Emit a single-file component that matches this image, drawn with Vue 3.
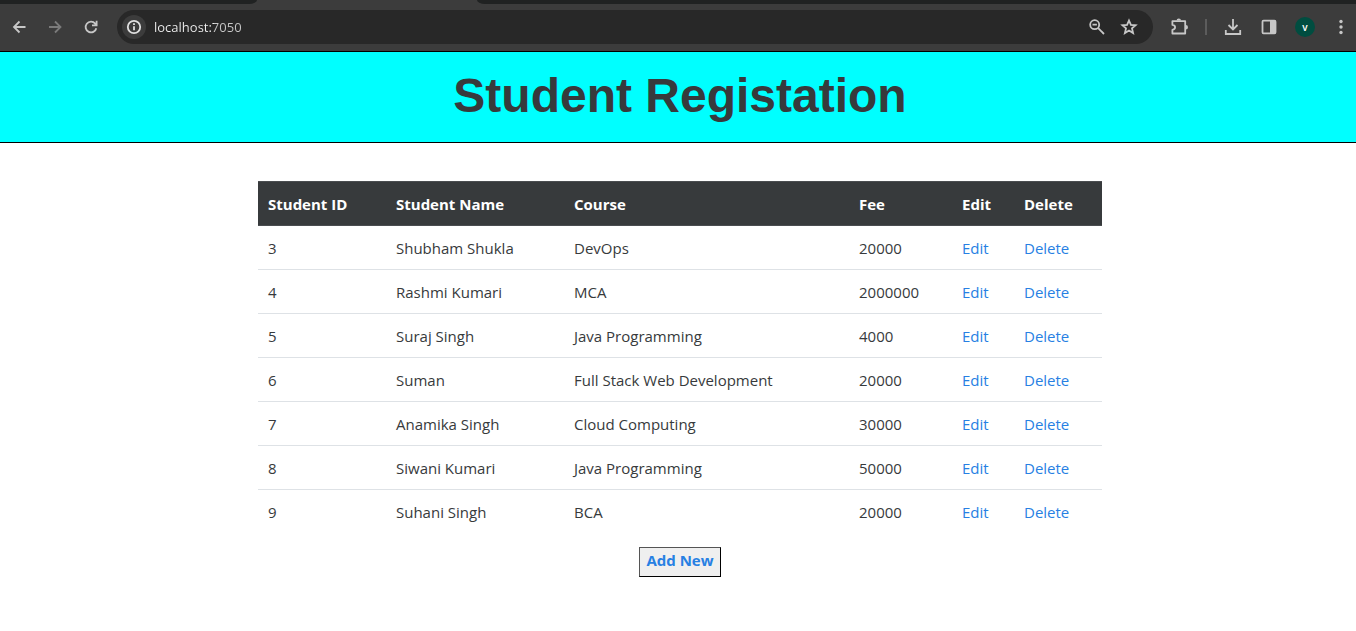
<script setup>
const columns = ['Student ID', 'Student Name', 'Course', 'Fee', 'Edit', 'Delete']

const students = [
  { id: 3, name: 'Shubham Shukla', course: 'DevOps', fee: 20000 },
  { id: 4, name: 'Rashmi Kumari', course: 'MCA', fee: 2000000 },
  { id: 5, name: 'Suraj Singh', course: 'Java Programming', fee: 4000 },
  { id: 6, name: 'Suman', course: 'Full Stack Web Development', fee: 20000 },
  { id: 7, name: 'Anamika Singh', course: 'Cloud Computing', fee: 30000 },
  { id: 8, name: 'Siwani Kumari', course: 'Java Programming', fee: 50000 },
  { id: 9, name: 'Suhani Singh', course: 'BCA', fee: 20000 },
]
</script>

<template>
  <div class="page">
    <div class="browser">
      <div class="tabs">
        <span class="tab-before"></span>
        <span class="tab-active"></span>
        <span class="tab-after"></span>
      </div>
      <div class="toolbar">
        <button class="tool" type="button" aria-label="Back">
          <svg viewBox="0 0 20 20"><path d="M16.500 10H5M10.500 4.500 5 10l5.500 5.500" /></svg>
        </button>
        <button class="tool dim" type="button" aria-label="Forward">
          <svg viewBox="0 0 20 20"><path d="M4 10h11.500M10 4.500 15.500 10 10 15.500" /></svg>
        </button>
        <button class="tool" type="button" aria-label="Reload">
          <svg viewBox="0 0 20 20"><path d="M15.300 11.200A5.400 5.400 0 1 1 14.200 6.600L15.300 8M15.600 3.800V8.400H11" /></svg>
        </button>
        <div class="address">
          <button class="info" type="button" aria-label="Site information">
            <svg viewBox="0 0 20 20"><circle cx="10" cy="10" r="6.200" /><path d="M10 9.200v4M10 6.300v1.800" /></svg>
          </button>
          <input class="url" type="text" value="localhost:7050" aria-label="Address" spellcheck="false" />
          <button class="tool" type="button" aria-label="Zoom">
            <svg viewBox="0 0 20 20"><circle cx="7.700" cy="7.700" r="4.500" /><path d="M11.200 11.200 17 17M5.500 7.700h4.400" /></svg>
          </button>
          <button class="tool" type="button" aria-label="Bookmark">
            <svg viewBox="0 0 20 20"><path d="m10 3.500 1.900 4.400 4.700.4-3.600 3.100 1.100 4.700-4.100-2.500-4.100 2.500L7 11.400 3.400 8.300l4.700-.4z" /></svg>
          </button>
        </div>
        <button class="tool" type="button" aria-label="Extensions">
          <svg viewBox="0 0 20 20"><path stroke-linejoin="round" d="M3.400 4.200H16.200V16.500H3.400V12.900C7 12.300 7 8.400 3.400 7.900Z" /><path class="solid" d="M7.600 3.600a2.200 2.200 0 0 1 4.400 0ZM16.800 8a2.200 2.200 0 0 1 0 4.400Z" /></svg>
        </button>
        <span class="divider"></span>
        <button class="tool" type="button" aria-label="Downloads">
          <svg viewBox="0 0 20 20"><path d="M10 2v10M5.500 8 10 12.400 14.500 8M2.800 13v4h14.400v-4" /></svg>
        </button>
        <button class="tool" type="button" aria-label="Side panel">
          <svg viewBox="0 0 20 20"><rect x="3.500" y="3.700" width="13" height="12.600" rx="1" /><path class="solid" d="M11 3.500h5.500v13H11z" /></svg>
        </button>
        <button class="avatar" type="button" aria-label="Profile">v</button>
        <button class="tool" type="button" aria-label="Menu">
          <svg viewBox="0 0 20 20"><g class="solid"><circle cx="10" cy="4.500" r="1.700" /><circle cx="10" cy="10" r="1.700" /><circle cx="10" cy="15.500" r="1.700" /></g></svg>
        </button>
      </div>
    </div>

    <header class="banner">
      <h1>Student Registation</h1>
    </header>

    <main class="content">
      <table class="students">
        <colgroup>
          <col class="c-id" /><col class="c-name" /><col class="c-course" />
          <col class="c-fee" /><col class="c-edit" /><col class="c-delete" />
        </colgroup>
        <thead>
          <tr><th v-for="c in columns" :key="c" scope="col">{{ c }}</th></tr>
        </thead>
        <tbody>
          <tr v-for="s in students" :key="s.id">
            <td>{{ s.id }}</td>
            <td>{{ s.name }}</td>
            <td>{{ s.course }}</td>
            <td>{{ s.fee }}</td>
            <td><a href="#edit">Edit</a></td>
            <td><a href="#delete">Delete</a></td>
          </tr>
        </tbody>
      </table>
      <button class="add" type="button">Add New</button>
    </main>
  </div>
</template>

<style>
body {
  margin: 0;
  background: #fff;
}
</style>

<style scoped>
.page {
  font-family: "Open Sans", "Noto Sans", sans-serif;
  font-size: 15px;
  line-height: 24px;
  color: #373a3c;
}
button {
  font: inherit;
  cursor: pointer;
}
.browser {
  background: #3c3c3c;
  border-bottom: 1px solid #000;
}
.tabs {
  display: flex;
  height: 4px;
}
.tab-before,
.tab-after {
  background: #202222;
}
.tab-before {
  width: 257px;
  border-bottom-right-radius: 8px 4px;
}
.tab-active {
  width: 220px;
}
.tab-after {
  flex: 1;
  border-bottom-left-radius: 8px 4px;
}
.toolbar {
  display: flex;
  align-items: center;
  gap: 16px;
  padding: 6px 5px 7px 9px;
}
.tool {
  flex: none;
  width: 20px;
  height: 20px;
  padding: 0;
  border: 0;
  background: none;
  color: #c7c7c7;
}
.dim {
  color: #7b7b7b;
}
svg {
  display: block;
  width: 20px;
  height: 20px;
  fill: none;
  stroke: currentColor;
  stroke-width: 1.8;
}
.solid {
  fill: currentColor;
  stroke: none;
}
.address {
  flex: 1;
  display: flex;
  align-items: center;
  gap: 12px;
  height: 34px;
  box-sizing: border-box;
  padding: 0 14px 0 5px;
  border-radius: 17px;
  background: #282828;
}
.info {
  flex: none;
  display: grid;
  place-items: center;
  width: 24px;
  height: 24px;
  padding: 0;
  border: 0;
  border-radius: 50%;
  background: #3c3c3c;
  color: #e0e0e0;
}
.url {
  flex: 1;
  min-width: 0;
  padding: 0;
  margin-left: -4px;
  border: 0;
  outline: 0;
  font-family: "Open Sans", "Noto Sans", sans-serif;
  font-size: 13px;
  line-height: 20px;
  color: transparent;
  background: linear-gradient(to right, #f0f0f0 60px, #c8c8c8 60px);
  background-clip: text;
  -webkit-background-clip: text;
}
.divider {
  width: 2px;
  height: 16px;
  background: #5c5c5c;
}
.avatar {
  width: 20px;
  height: 20px;
  padding: 0;
  border: 0;
  border-radius: 50%;
  background: #004d40;
  color: #fff;
  font-size: 10px;
  font-weight: 600;
  line-height: 18px;
}
.banner {
  padding: 13px 0 16px 4px;
  background: #0ff;
  border-bottom: 1px solid #000;
}
h1 {
  margin: 0;
  font-family: "Liberation Sans", Arial, sans-serif;
  font-size: 48px;
  line-height: 61px;
  font-weight: 700;
  text-align: center;
}
.content {
  display: flex;
  flex-direction: column;
  align-items: center;
  gap: 13px;
  padding: 38px 0 38px 4px;
}
.students {
  width: 100%;
  max-width: 844px;
  table-layout: fixed;
  border-collapse: separate;
  border-spacing: 0;
}
.c-id { width: 128px; }
.c-name { width: 178px; }
.c-course { width: 285px; }
.c-fee { width: 103px; }
.c-edit { width: 62px; }
.c-delete { width: 88px; }
th,
td {
  padding: 10px 10px 9px;
  text-align: left;
}
th {
  border-top: 1px solid #4a4d50;
  border-bottom: 1px solid #4a4d50;
  background: #373a3c;
  color: #fff;
  font-weight: 700;
}
td {
  border-bottom: 1px solid #dee2e6;
}
tbody tr:last-child td {
  border-bottom-color: transparent;
}
a {
  color: #2780e3;
  text-decoration: none;
}
.add {
  height: 30px;
  padding: 0 6px 5px;
  border: 1px solid #000;
  border-top-color: #555;
  border-left-color: #555;
  background: #efefef;
  color: #2780e3;
  font-weight: 700;
}
</style>
